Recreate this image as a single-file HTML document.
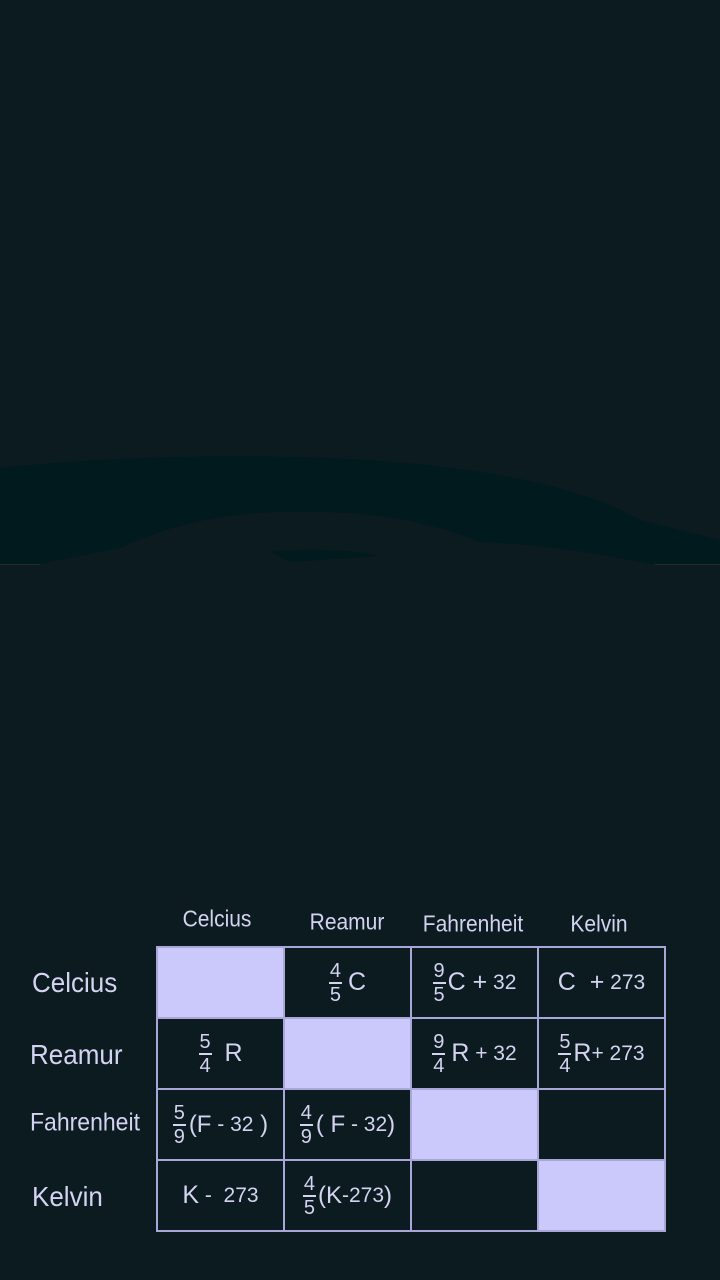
<!DOCTYPE html>
<html><head><meta charset="utf-8"><style>
*{margin:0;padding:0;box-sizing:border-box}
body{width:720px;height:1280px;background:#0c1b1f;position:relative;overflow:hidden;font-family:"Liberation Sans",sans-serif;color:#d4d3f2}
.a{position:absolute;white-space:nowrap}
.h{font-size:21px;transform:translateX(-50%) scaleY(1.1)}
.l{font-size:26px;left:32px;transform:scaleY(1.08);transform-origin:left top}
.c{position:absolute;display:flex;align-items:center;justify-content:center;font-size:25px;border:2px solid #a9a7d8}
.c span,.c{line-height:1}
.lav{background:#cbc9fc}
.dk{background:#0c1b1f}
.f{display:inline-flex;flex-direction:column;align-items:center;font-size:20px;line-height:17px;margin-right:6px}
.f i{font-style:normal}
.f b{display:block;width:13px;height:2px;background:#d4d3f2;margin:1px 0}
.s{font-size:21px}
</style></head><body>
<svg class="a" style="left:0;top:440px" width="720" height="130" viewBox="0 440 720 130">
<path d="M0 468 Q150 452 330 458 Q550 468 640 520 L720 540 L720 564 L650 564 Q560 545 480 542 Q400 510 300 512 Q200 510 120 548 L40 564 L0 564 Z" fill="#001a1e"/>
<path d="M270 552 Q330 546 380 556 L290 562 Z" fill="#001a1e"/>
<rect x="0" y="564" width="40" height="1" fill="#2a2a2a"/><rect x="655" y="564" width="65" height="1" fill="#2a2a2a"/>
</svg>
<div class="a h" style="left:217px;top:908px">Celcius</div>
<div class="a h" style="left:347px;top:911px">Reamur</div>
<div class="a h" style="left:473px;top:913px">Fahrenheit</div>
<div class="a h" style="left:599px;top:913px">Kelvin</div>
<div class="a l" style="top:966px">Celcius</div>
<div class="a l" style="top:1038px;left:30px">Reamur</div>
<div class="a" style="top:1109px;left:30px;font-size:23px;transform:scaleY(1.08)">Fahrenheit</div>
<div class="a l" style="top:1180px">Kelvin</div>

<div class="c lav" style="left:156px;top:946px;width:129px;height:73px"></div>
<div class="c dk" style="left:283px;top:946px;width:129px;height:73px"><span class="f"><i>4</i><b></b><i>5</i></span>C</div>
<div class="c dk" style="left:410px;top:946px;width:129px;height:73px"><span class="f" style="margin-right:2px"><i>9</i><b></b><i>5</i></span>C + <span class="s">&nbsp;32</span></div>
<div class="c dk" style="left:537px;top:946px;width:129px;height:73px">C &nbsp;+ <span class="s">&nbsp;273</span></div>

<div class="c dk" style="left:156px;top:1017px;width:129px;height:73px"><span class="f"><i>5</i><b></b><i>4</i></span>&nbsp;R</div>
<div class="c lav" style="left:283px;top:1017px;width:129px;height:73px"></div>
<div class="c dk" style="left:410px;top:1017px;width:129px;height:73px"><span class="f"><i>9</i><b></b><i>4</i></span>R <span class="s">&nbsp;+ 32</span></div>
<div class="c dk" style="left:537px;top:1017px;width:129px;height:73px"><span class="f" style="margin-right:2px"><i>5</i><b></b><i>4</i></span>R<span class="s">+ 273</span></div>

<div class="c dk" style="left:156px;top:1088px;width:129px;height:73px;font-size:24px"><span class="f" style="margin-right:3px"><i>5</i><b></b><i>9</i></span>(F <span class="s">&nbsp;- 32</span>&nbsp;)</div>
<div class="c dk" style="left:283px;top:1088px;width:129px;height:73px;font-size:24px"><span class="f" style="margin-right:3px"><i>4</i><b></b><i>9</i></span>( F <span class="s">&nbsp;- 32</span>)</div>
<div class="c lav" style="left:410px;top:1088px;width:129px;height:73px"></div>
<div class="c dk" style="left:537px;top:1088px;width:129px;height:73px"></div>

<div class="c dk" style="left:156px;top:1159px;width:129px;height:73px">K<span class="s">&nbsp;- &nbsp;273</span></div>
<div class="c dk" style="left:283px;top:1159px;width:129px;height:73px;font-size:24px"><span class="f" style="margin-right:2px"><i>4</i><b></b><i>5</i></span>(K<span class="s">-273</span>)</div>
<div class="c dk" style="left:410px;top:1159px;width:129px;height:73px"></div>
<div class="c lav" style="left:537px;top:1159px;width:129px;height:73px"></div>
</body></html>
